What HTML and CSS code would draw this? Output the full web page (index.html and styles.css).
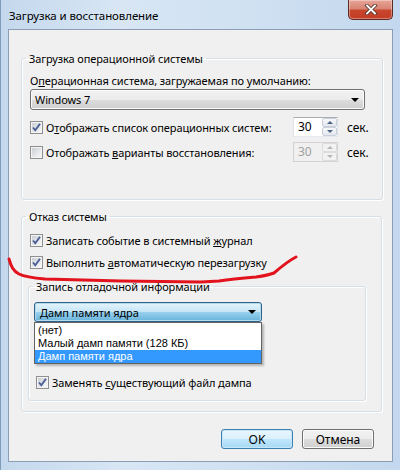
FILE: index.html
```html
<!DOCTYPE html>
<html lang="ru">
<head>
    <meta charset="UTF-8">
    <title>Загрузка и восстановление</title>
    <link rel="stylesheet" href="styles.css">
</head>
<body>
    <div class="window">
        <div class="titlebar">
            <span class="title">Загрузка и восстановление</span>
            <button class="close-btn">
                <svg width="14" height="11" viewBox="0 0 14 11">
                    <path d="M3 1.5 L11 9.5 M11 1.5 L3 9.5" stroke="#5a3a34" stroke-width="3.6" stroke-linecap="square"/>
                    <path d="M3 1.5 L11 9.5 M11 1.5 L3 9.5" stroke="#fff" stroke-width="1.8" stroke-linecap="square"/>
                </svg>
            </button>
        </div>

        <div class="client">
            <fieldset class="group group-os">
                <legend>Загрузка операционной системы</legend>
                <div class="field-label">О<u>п</u>ерационная система, загружаемая по умолчанию:</div>
                <div class="combo combo-wide">
                    <span>Windows 7</span>
                    <span class="combo-arrow"></span>
                </div>

                <div class="check-row row-first">
                    <span class="check checked">
                        <svg width="11" height="11" viewBox="0 0 11 11"><path d="M2 5.5 L4.3 8.3 L9 1.8" fill="none" stroke="#4b5f97" stroke-width="1.9"/></svg>
                    </span>
                    <span class="check-label">О<u>т</u>ображать список операционных систем:</span>
                    <div class="spin">
                        <span class="spin-value">30</span>
                        <span class="spin-btns"><span class="spin-up"></span><span class="spin-down"></span></span>
                    </div>
                    <span class="unit">сек.</span>
                </div>

                <div class="check-row row-second">
                    <span class="check"></span>
                    <span class="check-label">Отображать <u>в</u>арианты восстановления:</span>
                    <div class="spin disabled">
                        <span class="spin-value">30</span>
                        <span class="spin-btns"><span class="spin-up"></span><span class="spin-down"></span></span>
                    </div>
                    <span class="unit">сек.</span>
                </div>
            </fieldset>

            <fieldset class="group group-fail">
                <legend>Отказ системы</legend>
                <div class="check-row row-log">
                    <span class="check checked">
                        <svg width="11" height="11" viewBox="0 0 11 11"><path d="M2 5.5 L4.3 8.3 L9 1.8" fill="none" stroke="#4b5f97" stroke-width="1.9"/></svg>
                    </span>
                    <span class="check-label">Записать событие в системный <u>ж</u>урнал</span>
                </div>
                <div class="check-row row-reboot">
                    <span class="check checked">
                        <svg width="11" height="11" viewBox="0 0 11 11"><path d="M2 5.5 L4.3 8.3 L9 1.8" fill="none" stroke="#4b5f97" stroke-width="1.9"/></svg>
                    </span>
                    <span class="check-label">Выполнить <u>а</u>втоматическую перезагрузку</span>
                </div>

                <fieldset class="group group-debug">
                    <legend>Запись отладочной информации</legend>
                    <div class="combo-wrap">
                        <div class="combo combo-open">
                            <span>Дамп памяти ядра</span>
                            <span class="combo-arrow"></span>
                        </div>
                        <ul class="dropdown">
                            <li>(нет)</li>
                            <li>Малый дамп памяти (128 КБ)</li>
                            <li class="selected">Дамп памяти ядра</li>
                        </ul>
                    </div>
                    <div class="check-row row-replace">
                        <span class="check checked">
                            <svg width="11" height="11" viewBox="0 0 11 11"><path d="M2 5.5 L4.3 8.3 L9 1.8" fill="none" stroke="#4b5f97" stroke-width="1.9"/></svg>
                        </span>
                        <span class="check-label">Заменять <u>с</u>уществующий файл дампа</span>
                    </div>
                </fieldset>
            </fieldset>

            <div class="buttons">
                <button class="btn btn-default">OK</button>
                <button class="btn">Отмена</button>
            </div>
        </div>

        <!-- hand drawn red mark over the dialog -->
        <svg class="scribble" width="400" height="470" viewBox="0 0 400 470">
            <path d="M8 259 C 10 266, 12 271, 18 274 C 24 277, 32 278, 44 279 L 120 281 L 200 282 L 218 281 C 230 279, 242 278, 255 277 C 262 276, 268 275, 273 273 C 280 267, 287 261, 295 257" fill="none" stroke="#e2131c" stroke-width="3" stroke-linecap="round" stroke-linejoin="round"/>
        </svg>
    </div>
</body>
</html>
```

FILE: styles.css
```css
* {
    box-sizing: border-box;
}

body {
    margin: 0;
    background: #fff;
    font-family: "Noto Sans", "Liberation Sans", sans-serif;
    font-size: 11px;
    letter-spacing: -0.1px;
    color: #000;
}

.window {
    position: relative;
    width: 400px;
    height: 470px;
    display: flex;
    flex-direction: column;
    padding: 0 7px 8px 7px;
    background: linear-gradient(to right, #c4d8ed 0%, #d8e6f4 30%, #d0e1f2 60%, #c3d8ee 100%);
    border-left: 1px solid #7f9db9;
}

.titlebar {
    height: 29px;
    display: flex;
    align-items: flex-start;
}

.title {
    margin: 8px 0 0 1px;
    line-height: 15px;
    font-size: 11.5px;
    color: #000;
}

.close-btn {
    margin: 0 0 0 auto;
    width: 45px;
    height: 20px;
    padding: 0;
    border: 1px solid #5a2a22;
    border-top: none;
    border-radius: 0 0 5px 5px;
    background: linear-gradient(#e8a598 0%, #d98573 45%, #c8452e 55%, #c33c25 100%);
    box-shadow: inset 0 0 0 1px rgba(255,255,255,0.35);
    display: flex;
    align-items: center;
    justify-content: center;
}

.client {
    flex: 1;
    background: #f0f0f0;
    border: 1px solid #8d9db3;
    padding: 21px 10px 0 12px;
}

/* group boxes */
.group {
    margin: 0;
    border: 1px solid #d5dfe5;
    border-radius: 3px;
    box-shadow: inset 1px 1px 0 #fff, 1px 1px 0 #fff;
}

.group legend {
    line-height: 15px;
    padding: 0 3px;
}

.group-os {
    padding: 0 17px 37px 8px;
}

.group-os legend {
    margin-left: -4px;
}

.group-fail {
    margin-top: 9px;
    padding: 0 15px 10px 6px;
}

.group-fail legend {
    margin-left: -2px;
}

.group-debug {
    margin-top: 9px;
    padding: 0 0 10px 5px;
}

.group-debug legend {
    margin-left: -1px;
}

.field-label {
    margin-top: 7px;
    line-height: 15px;
}

/* combo boxes */
.combo {
    height: 21px;
    display: flex;
    align-items: center;
    justify-content: space-between;
    padding: 0 5px 0 4px;
    border: 1px solid #707070;
    border-radius: 3px;
    background: linear-gradient(#f2f2f2 0%, #ebebeb 50%, #dddddd 51%, #cfcfcf 100%);
    box-shadow: inset 0 0 0 1px #fbfbfb;
}

.combo-wide {
    margin-top: 1px;
    width: 335px;
}

.combo-arrow {
    width: 0;
    height: 0;
    border-left: 4px solid transparent;
    border-right: 4px solid transparent;
    border-top: 4px solid #000;
}

.combo-wrap {
    position: relative;
    margin-top: 8px;
    width: 228px;
}

.combo-open {
    height: 20px;
    border-color: #2c628b;
    background: linear-gradient(#e5f4fc 0%, #c4e5f6 50%, #98d1ef 51%, #68b3db 100%);
    box-shadow: inset 0 0 0 1px #b8d9ec;
    padding-left: 5px;
}

.dropdown {
    position: absolute;
    top: 100%;
    left: 0;
    right: 0;
    margin: 0;
    padding: 1px 0 0 0;
    list-style: none;
    background: #fff;
    border: 1px solid #646464;
    box-shadow: 2px 2px 2px rgba(0,0,0,0.25);
}

.dropdown li {
    font-family: "Liberation Sans", sans-serif;
    font-size: 11px;
    letter-spacing: 0;
    line-height: 13px;
    height: 13px;
    padding-left: 3px;
    white-space: nowrap;
}

.dropdown li.selected {
    background: #3399ff;
    color: #fff;
}

/* checkbox rows */
.check-row {
    display: flex;
    align-items: center;
}

.row-first {
    margin-top: 7px;
    height: 20px;
}

.row-second {
    margin-top: 5px;
    height: 20px;
}

.row-log {
    margin: 8px 0 0 2px;
    height: 16px;
}

.row-reboot {
    margin: 6px 0 0 2px;
    height: 16px;
}

.row-replace {
    margin: 52px 0 0 2px;
    height: 16px;
}

.check {
    width: 13px;
    height: 13px;
    flex: none;
    border: 1px solid #8e8f8f;
    background: linear-gradient(135deg, #c6cad0 0%, #eceef0 70%, #f8f8f8 100%);
    box-shadow: inset 0 0 0 1px #f4f4f4;
    display: flex;
    align-items: center;
    justify-content: center;
}

.check svg {
    display: block;
}

.check-label {
    flex: 1;
    margin-left: 3px;
    white-space: nowrap;
    line-height: 15px;
}

/* spin boxes */
.spin {
    width: 45px;
    height: 20px;
    display: flex;
    border: 1px solid #abadb3;
    border-color: #abadb3 #dbdfe6 #e3e9ef #e2e3ea;
    background: #fff;
}

.spin-value {
    flex: 1;
    padding-left: 4px;
    line-height: 18px;
    font-size: 12px;
}

.spin-btns {
    width: 15px;
    display: flex;
    flex-direction: column;
}

.spin-up,
.spin-down {
    flex: 1;
    display: flex;
    align-items: center;
    justify-content: center;
    border: 1px solid #c9d0dc;
    border-radius: 2px;
    background: linear-gradient(#f7f8fa, #e3e7ee);
}

.spin-up::after {
    content: "";
    border-left: 3px solid transparent;
    border-right: 3px solid transparent;
    border-bottom: 3px solid #4d6185;
}

.spin-down::after {
    content: "";
    border-left: 3px solid transparent;
    border-right: 3px solid transparent;
    border-top: 3px solid #4d6185;
}

.spin.disabled {
    background: #f0f0f0;
    border-color: #d3d3d3;
}

.spin.disabled .spin-value {
    color: #a0a0a0;
}

.spin.disabled .spin-up,
.spin.disabled .spin-down {
    border-color: #dcdcdc;
    background: #f2f2f2;
}

.spin.disabled .spin-up::after {
    border-bottom-color: #b5b5b5;
}

.spin.disabled .spin-down::after {
    border-top-color: #b5b5b5;
}

.unit {
    width: 18px;
    margin-left: 9px;
    white-space: nowrap;
    font-size: 12px;
}

/* dialog buttons */
.buttons {
    display: flex;
    justify-content: flex-end;
    gap: 9px;
    margin-top: 17px;
    padding-right: 8px;
}

.btn {
    width: 72px;
    height: 20px;
    padding: 0;
    font: inherit;
    font-size: 12px;
    color: #000;
    border: 1px solid #707070;
    border-radius: 3px;
    background: linear-gradient(#f2f2f2 0%, #ebebeb 50%, #dddddd 51%, #cfcfcf 100%);
    box-shadow: inset 0 0 0 1px #fbfbfb;
}

.btn-default {
    border-color: #3c7fb1;
    background: linear-gradient(#eaf6fd 0%, #d9f0fc 50%, #bee6fd 51%, #a7d9f5 100%);
    box-shadow: inset 0 0 0 1px #c7e6f8;
}

.scribble {
    position: absolute;
    top: 0;
    left: 0;
    pointer-events: none;
}
```
